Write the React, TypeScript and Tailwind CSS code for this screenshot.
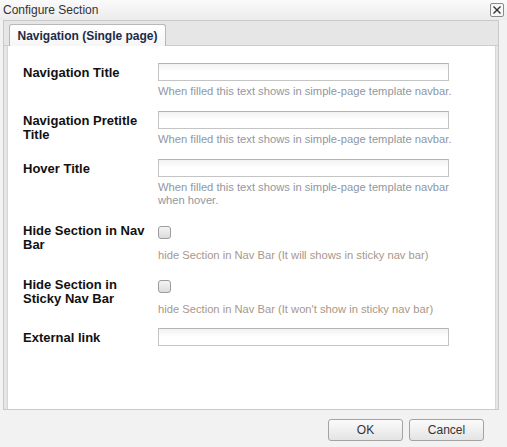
import React from "react";

const FONT = { fontFamily: '"Liberation Sans", Arial, sans-serif' };

function TextField() {
  return (
    <div className="h-[18px] w-[291px] border border-[#c4c4c4] border-t-[#b4b4b4] bg-gradient-to-b from-[#f2f2f2] to-white to-50%" />
  );
}

function CheckBox() {
  return (
    <div className="h-[13px] w-[13px] rounded-[3px] border border-[#9c9c9c] bg-gradient-to-b from-[#f4f4f4] to-[#dcdcdc]" />
  );
}

function Hint({ children, warm }: { children: React.ReactNode; warm?: boolean }) {
  return (
    <div
      className={
        "text-[11.2px] leading-[13px] " + (warm ? "text-[#a8978a]" : "text-[#8f97a1]")
      }
    >
      {children}
    </div>
  );
}

function Label({ children }: { children: React.ReactNode }) {
  return (
    <div className="mt-[3px] w-[135px] shrink-0 pr-2 text-[13px] font-bold leading-[14px] text-[#111]">
      {children}
    </div>
  );
}

export default function App() {
  return (
    <div
      className="flex h-[447px] w-[507px] flex-col bg-[#f2f2f2] text-[#222]"
      style={FONT}
    >
      {/* Title bar */}
      <div className="flex h-[20px] shrink-0 items-center justify-between bg-gradient-to-b from-[#fafafa] to-[#ececec] pl-[3px] pr-[3px]">
        <span className="text-[12px] leading-none text-[#333]">Configure Section</span>
        <div className="flex h-[14px] w-[14px] items-center justify-center rounded-[2px] border border-[#8a8a8a] bg-[#f7f7f7]">
          <svg width="10" height="10" viewBox="0 0 10 10">
            <path d="M1.5 1.5 L8.5 8.5 M8.5 1.5 L1.5 8.5" stroke="#333" strokeWidth="1.4" />
          </svg>
        </div>
      </div>

      {/* Panel */}
      <div className="ml-[3px] mr-[8px] flex h-[390px] shrink-0 flex-col border border-[#c9c9c9] bg-[#e6e6e6]">
        {/* Tab strip */}
        <div className="flex h-[25px] shrink-0 items-end border-b border-[#cdcdcd] pl-[5px]">
          <div className="-mb-px flex h-[22px] w-[157px] items-center justify-center rounded-t-[3px] border border-b-0 border-[#b8b8b8] bg-gradient-to-b from-white to-[#f6f6f6] text-[12px] font-bold text-[#1c2b47]">
            Navigation (Single page)
          </div>
        </div>

        {/* Body */}
        <div className="flex flex-1 flex-col pl-[3px] pr-[2px]">
          <div className="flex-1 border-l border-r border-[#d6d6d6] bg-white pl-[15px] pt-[17px]">
            {/* Navigation Title */}
            <div className="flex items-start">
              <Label>Navigation Title</Label>
              <div>
                <TextField />
                <div className="mt-[4px]">
                  <Hint>When filled this text shows in simple-page template navbar.</Hint>
                </div>
              </div>
            </div>

            {/* Navigation Pretitle Title */}
            <div className="mt-[13px] flex items-start">
              <Label>Navigation Pretitle Title</Label>
              <div>
                <TextField />
                <div className="mt-[4px]">
                  <Hint>When filled this text shows in simple-page template navbar.</Hint>
                </div>
              </div>
            </div>

            {/* Hover Title */}
            <div className="mt-[13px] flex items-start">
              <Label>Hover Title</Label>
              <div>
                <TextField />
                <div className="mt-[4px] w-[296px]">
                  <Hint>
                    When filled this text shows in simple-page template navbar when hover.
                  </Hint>
                </div>
              </div>
            </div>

            {/* Hide Section in Nav Bar */}
            <div className="mt-[14px] flex items-start">
              <Label>Hide Section in Nav Bar</Label>
              <div className="pt-[5px]">
                <CheckBox />
                <div className="mt-[10px]">
                  <Hint warm>hide Section in Nav Bar (It will shows in sticky nav bar)</Hint>
                </div>
              </div>
            </div>

            {/* Hide Section in Sticky Nav Bar */}
            <div className="mt-[13px] flex items-start">
              <Label>Hide Section in Sticky Nav Bar</Label>
              <div className="pt-[5px]">
                <CheckBox />
                <div className="mt-[10px]">
                  <Hint warm>hide Section in Nav Bar (It won't show in sticky nav bar)</Hint>
                </div>
              </div>
            </div>

            {/* External link */}
            <div className="mt-[12px] flex items-start">
              <Label>External link</Label>
              <TextField />
            </div>
          </div>
        </div>
      </div>

      {/* Footer */}
      <div className="flex flex-1 items-start justify-end gap-[6px] pr-[23px] pt-[9px]">
        <button className="h-[22px] w-[75px] rounded-[3px] border border-[#a3a3a3] bg-gradient-to-b from-[#fbfbfb] to-[#e4e4e4] text-[12px] text-[#333]">
          OK
        </button>
        <button className="h-[22px] w-[75px] rounded-[3px] border border-[#a3a3a3] bg-gradient-to-b from-[#fbfbfb] to-[#e4e4e4] text-[12px] text-[#333]">
          Cancel
        </button>
      </div>
    </div>
  );
}
